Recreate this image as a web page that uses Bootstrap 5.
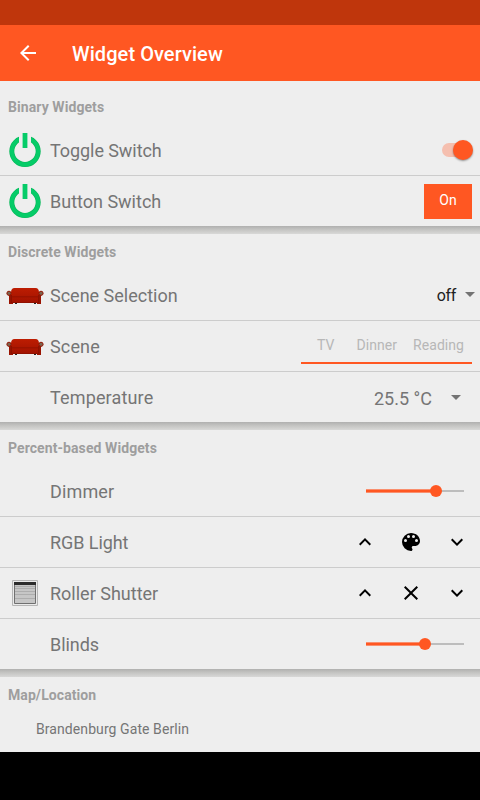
<!DOCTYPE html>
<html lang="en">
<head>
<meta charset="utf-8">
<meta name="viewport" content="width=device-width, initial-scale=1">
<title>Widget Overview</title>
<link href="https://cdn.jsdelivr.net/npm/bootstrap@5.3.0/dist/css/bootstrap.min.css" rel="stylesheet">
<style>
body{font-family:Roboto,"Liberation Sans",sans-serif;background:#000;color:#757575;width:480px;height:800px;overflow:hidden}
svg{display:block;flex:none}
.screen{height:752px;background:#eee}
.status-bar{height:25px;background:#bf360c}
.app-bar{height:56px;background:#ff5722;padding:0 16px!important}
.app-title{font-size:20px;font-weight:500;line-height:24px;margin-left:32px;padding-top:2px;letter-spacing:.07px}
.frame-title{height:36px;line-height:36px;padding-left:8px;font-size:14px;font-weight:700;color:#9e9e9e;margin:0;letter-spacing:.08px}
.widget{height:51px;border-bottom:1px solid #ccc}
.widget:last-child{height:50px;border-bottom:0}
.widget-icon{width:50px}
.widget-label{font-size:18px;line-height:24px;padding-top:2px}
.label-wide{letter-spacing:.15px}
.label-tight{letter-spacing:-.07px}
.frame-shadow{height:8px;background:linear-gradient(#b0b0af,#c4c4c2 45%,#d8d8d7)}
.switch-track{width:31px;height:20px;margin-right:7px}
.switch-track::before{content:"";width:28px;height:14px;border-radius:7px;background:#f5bfaf;margin-top:3px}
.switch-thumb{width:20px;height:20px;border-radius:50%;background:#ff5722;margin-left:-17.5px;box-shadow:0 1px 2px rgba(0,0,0,.4)}
.btn-on{width:48px;height:35px;background:#ff5722;color:#fff;font-size:14px;line-height:32px;letter-spacing:.1px}
.btn-on span{display:block;height:35px}
.spinner-text{font-size:16px;color:#212121;line-height:20px;margin-right:9px;padding-top:2px;letter-spacing:-.35px}
.spinner-arrow{margin-right:5px;margin-bottom:2px}
.scene-tabs{width:171px;height:33px;border-bottom:2px solid #ff5722;font-size:14px;line-height:28px;color:#b7b7b7;gap:22px;padding-right:8px;margin-top:3px}
.scene-tabs span:last-child{margin-left:-6px}
.scene-tabs span{letter-spacing:.05px}
.setpoint{font-size:18px;line-height:24px;margin-right:19px}
.setpoint-arrow{margin-right:19px}
.slider{width:98px;height:12px}
.slider-fill{height:4px;background:#ff5722;border:solid #f98f6e;border-width:1px 0}
.slider-knob{width:12px;height:12px;border-radius:50%;background:#ff5722;margin:0 -6px;z-index:1}
.slider-rest{height:2px;background:#bdbdbd}
.controls{gap:22px;margin-right:11px}
.map-name{font-size:14px;line-height:20px;padding:6px 0 0 36px;letter-spacing:.08px}
</style>
<script src="https://cdn.jsdelivr.net/npm/bootstrap@5.3.0/dist/js/bootstrap.bundle.min.js"></script>
</head>
<body>
<svg width="0" height="0" class="position-absolute">
<defs>
<linearGradient id="red" x1="0" y1="0" x2="0" y2="1"><stop offset="0" stop-color="#bd1d02"/><stop offset="1" stop-color="#a11200"/></linearGradient>
<symbol id="power" viewBox="0 0 32 34"><circle cx="16" cy="18.300" r="13.200" fill="none" stroke="#07b85a" stroke-width="5"/><circle cx="16" cy="18.300" r="13.200" fill="none" stroke="#05cc68" stroke-width="3.800"/><path d="M10 0h12v12H10z" fill="#eee"/><path d="M13.600 0h4.800v15h-4.800z" fill="#05cc68"/></symbol>
<symbol id="sofa" viewBox="0 0 38 18"><path d="M9 17h2v1H9zM28 17h2v1h-2z" fill="#222"/><path d="M3 6h32v12h-4v-1H7v1H3z" fill="#991300"/><path d="M5 6.500Q5 2 8.500 2h21Q33 2 33 6.500V17H5z" fill="url(#red)"/><path d="M6 10.800h26M5 16.500h28" stroke="#8b1100" stroke-width=".8"/><path d="M5.500 9v8M32.500 9v8" stroke="#861000" stroke-width=".8"/><circle cx="3" cy="7.300" r="2.100" fill="#7d6450" stroke="#931500" stroke-width="1"/><circle cx="35" cy="7.300" r="2.100" fill="#7d6450" stroke="#931500" stroke-width="1"/></symbol>
<symbol id="up" viewBox="0 0 24 24"><path d="M12 8l-6 6 1.410 1.410L12 10.830l4.590 4.580L18 14z"/></symbol>
<symbol id="down" viewBox="0 0 24 24"><path d="M16.590 8.590L12 13.170 7.410 8.590 6 10l6 6 6-6z"/></symbol>
</defs>
</svg>
<div class="screen d-flex flex-column">
<div class="status-bar"></div>
<nav class="navbar app-bar text-white justify-content-start">
<svg width="24" height="24" viewBox="0 0 24 24" fill="#fff"><path d="M20 11H7.830l5.590-5.590L12 4l-8 8 8 8 1.410-1.410L7.830 13H20z"/></svg>
<div class="app-title">Widget Overview</div>
</nav>
<section class="pt-2">
<h2 class="frame-title">Binary Widgets</h2>
<div>
<div class="widget d-flex align-items-center"><div class="widget-icon d-flex justify-content-center"><svg width="32" height="34"><use href="#power"/></svg></div><div class="widget-label label-tight flex-grow-1">Toggle Switch</div><div class="switch-track d-flex"><span class="switch-thumb flex-shrink-0"></span></div></div>
<div class="widget d-flex align-items-center"><div class="widget-icon d-flex justify-content-center"><svg width="32" height="34"><use href="#power"/></svg></div><div class="widget-label flex-grow-1">Button Switch</div><button class="btn btn-on rounded-0 border-0 p-0 me-2"><span>On</span></button></div>
</div>
</section>
<div class="frame-shadow"></div>
<section>
<h2 class="frame-title">Discrete Widgets</h2>
<div>
<div class="widget d-flex align-items-center"><div class="widget-icon d-flex justify-content-center"><svg width="38" height="18"><use href="#sofa"/></svg></div><div class="widget-label flex-grow-1">Scene Selection</div><div class="spinner-text">off</div><svg width="10" height="5" class="spinner-arrow"><path d="M0 0h10L5 5z" fill="#737373"/></svg></div>
<div class="widget d-flex align-items-center"><div class="widget-icon d-flex justify-content-center"><svg width="38" height="18"><use href="#sofa"/></svg></div><div class="widget-label label-wide flex-grow-1">Scene</div><div class="scene-tabs d-flex justify-content-end me-2"><span>TV</span><span>Dinner</span><span>Reading</span></div></div>
<div class="widget d-flex align-items-center"><div class="widget-icon"></div><div class="widget-label label-wide flex-grow-1">Temperature</div><div class="setpoint pt-1">25.5 °C</div><svg width="10" height="5" class="setpoint-arrow"><path d="M0 0h10L5 5z" fill="#737373"/></svg></div>
</div>
</section>
<div class="frame-shadow"></div>
<section>
<h2 class="frame-title">Percent-based Widgets</h2>
<div>
<div class="widget d-flex align-items-center"><div class="widget-icon"></div><div class="widget-label label-wide flex-grow-1">Dimmer</div><div class="slider d-flex align-items-center me-3"><span class="slider-fill" style="width:70px"></span><span class="slider-knob"></span><span class="slider-rest flex-grow-1"></span></div></div>
<div class="widget d-flex align-items-center"><div class="widget-icon"></div><div class="widget-label label-tight flex-grow-1">RGB Light</div><div class="controls d-flex"><svg width="24" height="24"><use href="#up"/></svg><svg width="24" height="24" viewBox="0 0 24 24"><path d="M12 3a9 9 0 0 0 0 18c.83 0 1.500-.67 1.500-1.500 0-.39-.15-.74-.39-1.010-.23-.26-.38-.61-.38-.99 0-.83.67-1.500 1.500-1.500H16c2.760 0 5-2.240 5-5 0-4.420-4.030-8-9-8zm-5.500 9a1.500 1.500 0 1 1 0-3 1.500 1.500 0 0 1 0 3zm3-4a1.500 1.500 0 1 1 0-3 1.500 1.500 0 0 1 0 3zm5 0a1.500 1.500 0 1 1 0-3 1.500 1.500 0 0 1 0 3zm3 4a1.500 1.500 0 1 1 0-3 1.500 1.500 0 0 1 0 3z"/></svg><svg width="24" height="24"><use href="#down"/></svg></div></div>
<div class="widget d-flex align-items-center"><div class="widget-icon d-flex justify-content-center"><svg width="26" height="26"><path d="M.5.5h25v25H.5z" fill="#eaeaea" stroke="#b5b5b5"/><path d="M2.500 2.500h21v21h-21z" fill="#c6c6c6" stroke="#707070"/><path d="M3 6.500h20M3 8.500h20M3 11.500h20M3 14.500h20M3 18.500h20" stroke="#adadad"/><path d="M2 2h22v3H2z" fill="#2c2c2c"/></svg></div><div class="widget-label flex-grow-1">Roller Shutter</div><div class="controls d-flex"><svg width="24" height="24"><use href="#up"/></svg><svg width="24" height="24" viewBox="0 0 24 24"><path d="M19 6.410L17.590 5 12 10.590 6.410 5 5 6.410 10.590 12 5 17.590 6.410 19 12 13.410 17.590 19 19 17.590 13.410 12z"/></svg><svg width="24" height="24"><use href="#down"/></svg></div></div>
<div class="widget d-flex align-items-center"><div class="widget-icon"></div><div class="widget-label label-tight flex-grow-1">Blinds</div><div class="slider d-flex align-items-center me-3"><span class="slider-fill" style="width:59px"></span><span class="slider-knob"></span><span class="slider-rest flex-grow-1"></span></div></div>
</div>
</section>
<div class="frame-shadow"></div>
<section>
<h2 class="frame-title">Map/Location</h2>
<div class="map-name">Brandenburg Gate Berlin</div>
</section>
</div>
</body>
</html>
